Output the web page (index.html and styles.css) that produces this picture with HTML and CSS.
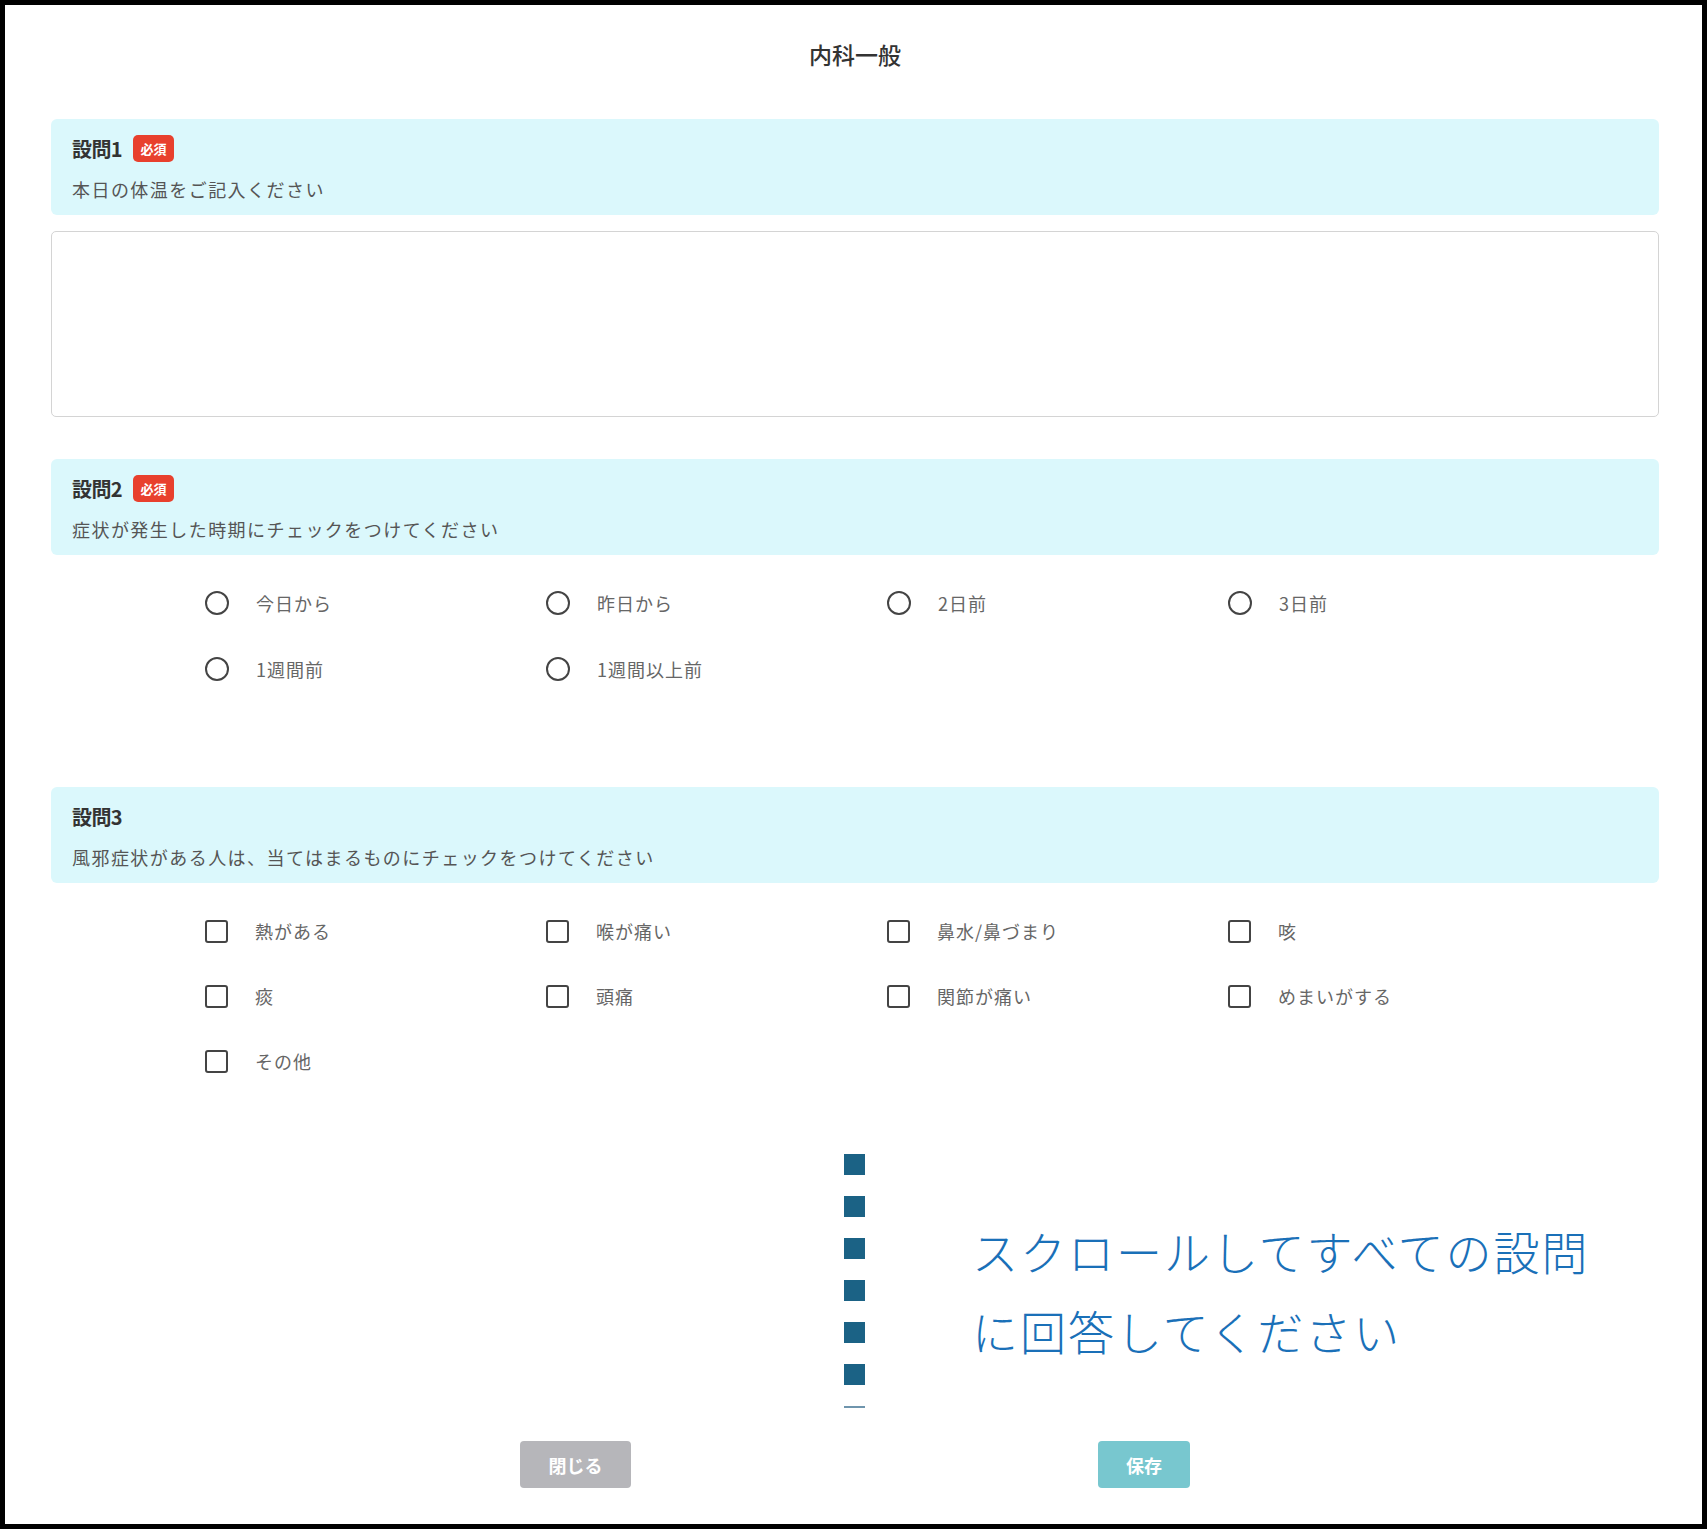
FILE: index.html
```html
<!DOCTYPE html>
<html lang="ja">
<head>
<meta charset="utf-8">
<title>内科一般</title>
<link rel="stylesheet" href="styles.css">
</head>
<body>
<div class="page">
  <h1 class="title">内科一般</h1>

  <section class="question q1">
    <div class="q-head">
      <div class="q-label"><span class="q-num">設問1</span><span class="badge">必須</span></div>
      <p class="q-text">本日の体温をご記入ください</p>
    </div>
    <textarea class="answer"></textarea>
  </section>

  <section class="question q2">
    <div class="q-head">
      <div class="q-label"><span class="q-num">設問2</span><span class="badge">必須</span></div>
      <p class="q-text">症状が発生した時期にチェックをつけてください</p>
    </div>
    <div class="options radios">
      <label class="opt"><input type="radio" name="q2"><span>今日から</span></label>
      <label class="opt"><input type="radio" name="q2"><span>昨日から</span></label>
      <label class="opt"><input type="radio" name="q2"><span>2日前</span></label>
      <label class="opt"><input type="radio" name="q2"><span>3日前</span></label>
      <label class="opt"><input type="radio" name="q2"><span>1週間前</span></label>
      <label class="opt"><input type="radio" name="q2"><span>1週間以上前</span></label>
    </div>
  </section>

  <section class="question q3">
    <div class="q-head">
      <div class="q-label"><span class="q-num">設問3</span></div>
      <p class="q-text">風邪症状がある人は、当てはまるものにチェックをつけてください</p>
    </div>
    <div class="options checks">
      <label class="opt"><input type="checkbox"><span>熱がある</span></label>
      <label class="opt"><input type="checkbox"><span>喉が痛い</span></label>
      <label class="opt"><input type="checkbox"><span>鼻水/鼻づまり</span></label>
      <label class="opt"><input type="checkbox"><span>咳</span></label>
      <label class="opt"><input type="checkbox"><span>痰</span></label>
      <label class="opt"><input type="checkbox"><span>頭痛</span></label>
      <label class="opt"><input type="checkbox"><span>関節が痛い</span></label>
      <label class="opt"><input type="checkbox"><span>めまいがする</span></label>
      <label class="opt"><input type="checkbox"><span>その他</span></label>
    </div>
  </section>

  <div class="scroll-note">
    <div class="dots">
      <span class="dot"></span><span class="dot"></span><span class="dot"></span>
      <span class="dot"></span><span class="dot"></span><span class="dot"></span>
      <span class="dot-end"></span>
    </div>
    <p class="note-text">スクロールしてすべての設問<br>に回答してください</p>
  </div>

  <div class="actions">
    <button class="btn btn-close" type="button">閉じる</button>
    <button class="btn btn-save" type="button">保存</button>
  </div>
</div>
</body>
</html>
```

FILE: styles.css
```css
* { box-sizing: border-box; }

html, body {
  margin: 0;
  background: #000;
}

body {
  padding: 5px;
  font-family: "Noto Sans CJK JP", "Noto Sans", sans-serif;
  color: #333;
}

.page {
  background: #fff;
  height: 1519px;
  padding: 34px 43px 0 46px;
  display: flex;
  flex-direction: column;
}

.title {
  margin: 0;
  font-size: 23px;
  line-height: 30px;
  font-weight: 500;
  text-align: center;
  color: #333;
}

.question { display: flex; flex-direction: column; }
.q1 { margin-top: 50px; }
.q2 { margin-top: 42px; }
.q3 { margin-top: 103px; }

.q-head {
  background: #dbf8fc;
  border-radius: 6px;
  height: 96px;
  padding: 16px 21px 0;
}

.q-label {
  display: flex;
  align-items: center;
  height: 26px;
  gap: 11px;
}

.q-num {
  font-size: 20px;
  font-weight: 700;
  color: #333;
  letter-spacing: -0.6px;
}

.badge {
  display: inline-flex;
  align-items: center;
  justify-content: center;
  width: 41px;
  height: 27px;
  border-radius: 5px;
  background: #e8402d;
  color: #fff;
  font-size: 13px;
  font-weight: 700;
}

.q-text {
  margin: 15px 0 0;
  font-size: 18px;
  line-height: 26px;
  color: #555;
  letter-spacing: 1.45px;
}

.answer {
  margin-top: 16px;
  height: 186px;
  border: 1.5px solid #d4d4d4;
  border-radius: 5px;
  resize: none;
  background: #fff;
}

.options {
  display: grid;
  grid-template-columns: repeat(4, 341px);
  padding-left: 154px;
  margin-top: 33px;
  row-gap: 36px;
}
.checks { margin-top: 33px; row-gap: 35px; }

.opt {
  display: flex;
  align-items: center;
  height: 30px;
  gap: 27px;
  font-size: 18px;
  color: #666;
  letter-spacing: 1px;
}

.opt input {
  appearance: none;
  -webkit-appearance: none;
  margin: 0;
  width: 24px;
  height: 24px;
  border: 2.5px solid #444;
  background: #fff;
  flex: none;
}
.opt input[type="radio"] { border-radius: 50%; }
.opt input[type="checkbox"] { border-radius: 3px; width: 23px; height: 23px; }

.scroll-note {
  margin-top: 78px;
  margin-left: 793px;
  display: flex;
  align-items: flex-start;
}

.dots {
  display: flex;
  flex-direction: column;
  gap: 21px;
  width: 21px;
}
.dot {
  display: block;
  width: 21px;
  height: 21px;
  background: #1b6285;
}
.dot-end {
  display: block;
  width: 21px;
  height: 2px;
  margin-top: 0;
  background: #6f95ad;
}

.note-text {
  margin: 56px 0 0 107px;
  font-size: 46px;
  line-height: 80px;
  font-weight: 300;
  letter-spacing: 2px;
  color: #1a70b8;
}

.actions {
  margin-top: 33px;
  display: flex;
  justify-content: center;
  gap: 467px;
}

.btn {
  height: 47px;
  border: none;
  border-radius: 4px;
  color: #fff;
  font-family: "Noto Sans CJK JP", sans-serif;
  font-size: 18px;
  font-weight: 700;
  padding: 0;
}
.btn-close { width: 111px; background: #b6b6ba; }
.btn-save { width: 92px; background: #78c7cf; }
```
